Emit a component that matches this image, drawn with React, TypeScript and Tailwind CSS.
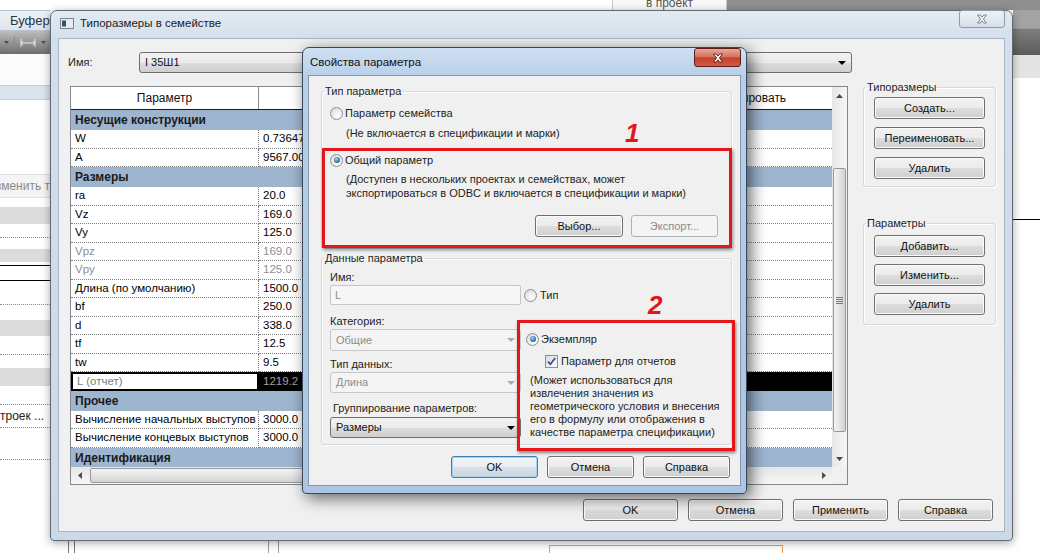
import clsx from "clsx";
import type { ReactNode } from "react";

const face = "font-['Liberation_Sans',Arial,sans-serif]";

type Row =
  | { group: string }
  | { name: string; value: string; muted?: boolean; sel?: boolean };

const rows: Row[] = [
  { group: "Несущие конструкции" },
  { name: "W", value: "0.73647" },
  { name: "A", value: "9567.00" },
  { group: "Размеры" },
  { name: "ra", value: "20.0" },
  { name: "Vz", value: "169.0" },
  { name: "Vy", value: "125.0" },
  { name: "Vpz", value: "169.0", muted: true },
  { name: "Vpy", value: "125.0", muted: true },
  { name: "Длина (по умолчанию)", value: "1500.0" },
  { name: "bf", value: "250.0" },
  { name: "d", value: "338.0" },
  { name: "tf", value: "12.5" },
  { name: "tw", value: "9.5" },
  { name: "L (отчет)", value: "1219.2", sel: true },
  { group: "Прочее" },
  { name: "Вычисление начальных выступов", value: "3000.0" },
  { name: "Вычисление концевых выступов", value: "3000.0" },
  { group: "Идентификация" },
];

function Btn({
  children,
  className,
  focused,
  disabled,
}: {
  children: ReactNode;
  className?: string;
  focused?: boolean;
  disabled?: boolean;
}) {
  return (
    <div
      className={clsx(
        "flex h-[22px] shrink-0 items-center justify-center rounded-[3px] border text-[11px] leading-none",
        disabled
          ? "border-[#adb2b5] bg-[#f4f4f4] text-[#8a8a8a]"
          : focused
            ? "border-[#3c7fb1] bg-[linear-gradient(#f1f5f8,#e8eef3_50%,#d8e1e9_51%,#cbd5de)] text-[#111] shadow-[inset_0_0_0_1px_#a9d4ef]"
            : "border-[#707070] bg-[linear-gradient(#f2f2f2,#ebebeb_50%,#dddddd_51%,#cfcfcf)] text-[#111] shadow-[inset_0_0_0_1px_#fbfbfb]",
        className,
      )}
    >
      {children}
    </div>
  );
}

function Group({ title, className, children }: { title: string; className?: string; children: ReactNode }) {
  return (
    <fieldset className={clsx("shrink-0 rounded-[3px] border border-[#d0d9df] shadow-[inset_1px_1px_0_#fff,1px_1px_0_#fff]", className)}>
      <legend className="ml-[2px] px-[1px] text-[11px] leading-[14px] text-[#1e1e1e]">{title}</legend>
      {children}
    </fieldset>
  );
}

function Radio({ on }: { on?: boolean }) {
  return (
    <span className="flex h-[13px] w-[13px] shrink-0 items-center justify-center rounded-full border border-[#8c8f91] bg-[radial-gradient(circle_at_65%_70%,#ffffff,#d6d6d6)]">
      {on && <span className="h-[6px] w-[6px] rounded-full bg-[radial-gradient(circle_at_40%_35%,#9bd6f8,#1d5c93_75%)]" />}
    </span>
  );
}

function Check() {
  return (
    <span className="flex h-[13px] w-[13px] shrink-0 items-center justify-center border border-[#8c8f91] bg-[linear-gradient(135deg,#dadada,#fafafa)]">
      <svg width="9" height="9" viewBox="0 0 9 9">
        <path d="M1 4.6l2.4 2.6L8.2 1" fill="none" stroke="#3d4f90" strokeWidth="1.8" />
      </svg>
    </span>
  );
}

function Arrow({ color = "#000" }: { color?: string }) {
  return (
    <svg width="8" height="4" viewBox="0 0 8 4">
      <path d="M0 0h8L4 4z" fill={color} />
    </svg>
  );
}

function Tri({ d, w = 7, h = 4 }: { d: string; w?: number; h?: number }) {
  return (
    <svg width={w} height={h} viewBox={`0 0 ${w} ${h}`}>
      <path d={d} fill="#4a4a4a" />
    </svg>
  );
}

function Drop({ text, className, disabled }: { text: string; className?: string; disabled?: boolean }) {
  return (
    <div
      className={clsx(
        "flex shrink-0 items-center justify-between rounded-[3px] border pl-[5px] pr-[5px] text-[11px]",
        disabled
          ? "border-[#c3c7ca] bg-[#f4f4f4] text-[#8d8d8d]"
          : "border-[#707070] bg-[linear-gradient(#f2f2f2,#ebebeb_50%,#dddddd_51%,#cfcfcf)] text-[#111]",
        className,
      )}
    >
      <span>{text}</span>
      <Arrow color={disabled ? "#ababab" : "#000"} />
    </div>
  );
}

function XGlyph({ fill, stroke }: { fill: string; stroke: string }) {
  return (
    <svg width="12" height="10" viewBox="0 0 12 10">
      <path d="M1.5 1h2.8L6 3.2 7.7 1h2.8L7.4 5l3.1 4H7.7L6 6.8 4.3 9H1.5l3.1-4z" fill={fill} stroke={stroke} strokeWidth="0.9" />
    </svg>
  );
}

function FamilyIcon() {
  return (
    <svg width="14" height="11" viewBox="0 0 14 11" className="mt-[7px] ml-[2px] shrink-0">
      <rect x="0.5" y="0.5" width="13" height="10" fill="#e8ecf0" stroke="#7c858f" />
      <rect x="2" y="2.5" width="4" height="6" fill="#2e5a5e" />
    </svg>
  );
}

function RibbonTop() {
  return (
    <div className="flex h-[10px] shrink-0">
      <div className="w-[612px] bg-white" />
      <div className="flex w-[115px] items-end justify-center overflow-hidden border-x border-[#c9c9c9] bg-[#f8f8f8] text-[12px] leading-[14px] text-[#555]">
        в проект
      </div>
      <div className="flex-1 bg-[#8f8f8f]" />
    </div>
  );
}

// properties palette peeking out on the left of the dialogs
function PaletteLeft() {
  return (
    <div className="flex w-[50px] shrink-0 flex-col overflow-hidden bg-white">
      <div className="flex h-[21px] shrink-0 items-center whitespace-nowrap border-y border-[#b8c4d1] bg-[linear-gradient(#eef2f6,#dde4ec)] pl-[10px] text-[13px] text-[#2a3644]">
        Буфер обмена
      </div>
      <div className="flex h-[23px] shrink-0 items-center gap-[5px] bg-[linear-gradient(#bdbdbd,#6e6e6e)] pl-[4px]">
        <Tri d="M0 0h5L2.5 3z" w={5} h={3} />
        <span className="h-[14px] w-px bg-[#8a8a8a]" />
        <svg width="16" height="8" viewBox="0 0 16 8">
          <path d="M1 0v8M15 0v8M1 4h14M3 2L1 4l2 2M13 2l2 2-2 2" fill="none" stroke="#e8e8e8" strokeWidth="1" />
        </svg>
        <Tri d="M0 0h5L2.5 3z" w={5} h={3} />
      </div>
      <div className="h-[31px] shrink-0 bg-[#fbfbfb]" />
      <div className="h-[15px] shrink-0 border-y border-[#c5cfda] bg-[#dbe3ec]" />
      <div className="h-[74px] shrink-0" />
      <div className="flex h-[24px] shrink-0 items-center overflow-hidden whitespace-nowrap border-y border-[#e0e0e0] bg-[#f4f4f4] text-[12px] text-[#8a8a8a]">
        <span className="-ml-[13px]">Изменить тип</span>
      </div>
      <div className="mt-[9px] h-[17px] shrink-0 bg-[#dcdcdc]" />
      <div className="h-[14px] shrink-0 border-b border-dotted border-[#888]" />
      <div className="h-[11px] shrink-0" />
      <div className="h-[13px] shrink-0 bg-[#dcdcdc]" />
      <div className="h-[3px] shrink-0" />
      <div className="h-[16px] shrink-0 border-y border-black" />
      <div className="h-[24px] shrink-0 border-b border-dotted border-[#888]" />
      <div className="h-[15px] shrink-0" />
      <div className="h-[16px] shrink-0 bg-[#dcdcdc]" />
      <div className="h-[19px] shrink-0 border-b border-dotted border-[#888]" />
      <div className="h-[13px] shrink-0" />
      <div className="h-[18px] shrink-0 bg-[#dcdcdc]" />
      <div className="h-[19px] shrink-0 border-b border-dotted border-[#888]" />
      <div className="flex h-[23px] shrink-0 items-center overflow-hidden whitespace-nowrap border-b border-dotted border-[#888] text-[12px] text-[#222]">
        <span className="-ml-[6px]">строек ...</span>
      </div>
      <div className="h-[32px] shrink-0 border-b border-dotted border-[#888]" />
    </div>
  );
}

function PaneRight() {
  return (
    <div className="flex w-[27px] shrink-0 flex-col">
      <div className="h-[18px] bg-[#a3a3a3]" />
      <div className="h-[27px] border-t border-[#9a9a9a] bg-[linear-gradient(#7d7d7d,#5c5c5c)]" />
      <div className="h-[23px] bg-[#e4e4e4]" />
      <div className="h-[142px] border-b border-black bg-white" />
    </div>
  );
}

function FooterStrip() {
  return (
    <div className="flex h-[12px] shrink-0 bg-white">
      <div className="ml-[68px] w-px bg-[#7a7a7a]" />
      <div className="ml-[5px] w-px bg-[#7a7a7a]" />
      <div className="ml-[193px] w-px bg-[#9a9a9a]" />
      <div className="ml-[9px] w-px bg-[#9a9a9a]" />
      <div className="ml-[270px] mt-[4px] h-[8px] w-[234px] border-x border-t border-[#f09a52]" />
    </div>
  );
}

function TypeTable() {
  return (
    <div className="mt-[6px] ml-[2px] flex h-[399px] w-[778px] shrink-0 flex-col border border-[#828790] bg-white">
      <div className="flex h-[380px]">
        <div className="w-[761px] overflow-hidden">
          <div className="flex h-[23px] border-b border-[#1a1a1a] text-[12px] text-[#111]">
            <div className="flex w-[188px] items-center justify-center border-r border-[#8c8c8c]">Параметр</div>
            <div className="flex w-[220px] items-center justify-center border-r border-[#d5d5d5]">Значение</div>
            <div className="flex w-[190px] items-center justify-center border-r border-[#d5d5d5]">Формула</div>
            <div className="flex w-[163px] items-center justify-center">Блокировать</div>
          </div>
          {rows.map((r, i) =>
            "group" in r ? (
              <div key={i} className="flex h-[20px] items-center bg-[#9db5cf] pl-[4px] text-[12px] font-bold text-[#1a1a1a]">
                {r.group}
              </div>
            ) : (
              <div key={i} className="flex h-[18.5px] text-[11.5px]">
                <div
                  className={clsx(
                    "flex w-[188px] items-center overflow-hidden whitespace-nowrap pl-[4px]",
                    r.sel ? "border-2 border-black pl-[3px] text-[#7d7d7d]" : "border-r border-b border-dotted border-[#7f7f7f]",
                    r.muted && "text-[#8f8f8f]",
                  )}
                >
                  {r.name}
                </div>
                <div
                  className={clsx(
                    "flex w-[220px] items-center pl-[4px]",
                    r.sel ? "bg-black text-[#a0a0a0]" : "border-r border-b border-dotted border-[#7f7f7f]",
                    r.muted && "text-[#8f8f8f]",
                  )}
                >
                  {r.value}
                </div>
                <div className={clsx("w-[190px]", r.sel ? "bg-black" : "border-r border-b border-dotted border-[#7f7f7f]")} />
                <div className={clsx("w-[163px]", r.sel ? "bg-black" : "border-b border-dotted border-[#7f7f7f]")} />
              </div>
            ),
          )}
        </div>
        {/* vertical scrollbar */}
        <div className="flex w-[15px] flex-col bg-[linear-gradient(90deg,#e6e6e6,#f6f6f6)]">
          <div className="flex h-[17px] shrink-0 items-center justify-center">
            <Tri d="M0 4L3.5 0 7 4z" />
          </div>
          <div className="mx-px mt-[64px] flex h-[264px] shrink-0 items-center justify-center rounded-[2px] border border-[#9a9a9a] bg-[linear-gradient(90deg,#f4f4f4,#e4e4e4_50%,#d3d3d3)]">
            <div className="flex flex-col gap-[1px]">
              <span className="h-px w-[7px] bg-[#777]" />
              <span className="h-px w-[7px] bg-[#777]" />
              <span className="h-px w-[7px] bg-[#777]" />
              <span className="h-px w-[7px] bg-[#777]" />
            </div>
          </div>
          <div className="flex-1" />
          <div className="flex h-[17px] shrink-0 items-center justify-center">
            <Tri d="M0 0h7L3.5 4z" />
          </div>
        </div>
      </div>
      {/* horizontal scrollbar */}
      <div className="flex flex-1">
        <div className="flex w-[761px] items-center bg-[linear-gradient(#e6e6e6,#f6f6f6)]">
          <div className="flex w-[17px] justify-center">
            <Tri d="M4 0v7L0 3.5z" w={4} h={7} />
          </div>
          <div className="ml-[2px] h-[15px] w-[560px] rounded-[2px] border border-[#9a9a9a] bg-[linear-gradient(#f4f4f4,#e4e4e4_50%,#d3d3d3)]" />
          <div className="flex-1" />
          <div className="flex w-[17px] justify-center">
            <Tri d="M0 0v7l4-3.5z" w={4} h={7} />
          </div>
        </div>
        <div className="flex-1 bg-[#f0f0f0]" />
      </div>
    </div>
  );
}

function TypesWindow() {
  return (
    <div className="absolute left-[50px] top-[10px] flex h-[531px] w-[963px] flex-col rounded-t-[7px] rounded-b-[4px] border border-[#616b76] bg-[linear-gradient(#e3ebf3,#d3dfeb_28px,#cbd8e6)] px-[7px] pb-[8px] shadow-[0_2px_8px_rgba(0,0,0,0.35)]">
      <div className="flex h-[27px] shrink-0 items-start">
        <FamilyIcon />
        <span className="ml-[6px] mt-[5px] text-[11.5px] leading-[14px] text-[#1b1b1b]">Типоразмеры в семействе</span>
        <div className="ml-auto -mt-px flex h-[18px] w-[46px] items-center justify-center rounded-[3px] border border-[#8d9bab] bg-[linear-gradient(#eef2f6,#d6dfe9)]">
          <XGlyph fill="#f4f6f8" stroke="#6f7a86" />
        </div>
      </div>
      <div className="flex flex-1 flex-col border border-[#a9b5c3] bg-[#f0f0f0] pl-[9px] pr-[11px] pt-[13px]">
        <div className="flex h-[21px] items-center">
          <span className="w-[71px] text-[11px] text-[#1e1e1e]">Имя:</span>
          <Drop text="I 35Ш1" className="h-[21px] w-[713px]" />
        </div>
        <div className="mt-[7px] flex items-start">
          <TypeTable />
          <div className="ml-[15px] flex w-[130px] flex-col">
            <Group title="Типоразмеры" className="h-[107px]">
              <div className="flex flex-col gap-[8px] px-[10px] pt-[3px]">
                <Btn className="w-[111px]">Создать...</Btn>
                <Btn className="w-[111px]">Переименовать...</Btn>
                <Btn className="w-[111px]">Удалить</Btn>
              </div>
            </Group>
            <Group title="Параметры" className="mt-[29px] h-[109px]">
              <div className="flex flex-col gap-[7px] px-[10px] pt-[5px]">
                <Btn className="w-[111px]">Добавить...</Btn>
                <Btn className="w-[111px]">Изменить...</Btn>
                <Btn className="w-[111px]">Удалить</Btn>
              </div>
            </Group>
          </div>
        </div>
        <div className="mt-[14px] flex justify-end gap-[10px]">
          <Btn className="w-[95px]">OK</Btn>
          <Btn className="w-[95px]">Отмена</Btn>
          <Btn className="w-[95px]">Применить</Btn>
          <Btn className="w-[95px]">Справка</Btn>
        </div>
      </div>
    </div>
  );
}

function ParamWindow() {
  return (
    <div className="absolute left-[302px] top-[47px] flex h-[447px] w-[445px] flex-col rounded-t-[7px] rounded-b-[4px] border border-[#38475a] bg-[linear-gradient(#cfe0f2,#b9cfe8_28px,#adc5e1)] px-[5px] pb-[7px] shadow-[4px_4px_16px_rgba(0,0,0,0.6)]">
      <div className="flex h-[27px] shrink-0 items-start">
        <span className="ml-[2px] mt-[7px] text-[11.5px] leading-[14px] text-[#111]">Свойства параметра</span>
        <div className="ml-auto flex h-[19px] w-[47px] items-center justify-center rounded-[3px] border border-[#5b1e1a] bg-[linear-gradient(#eaa898,#d7735d_45%,#c5402f_52%,#d45a42)]">
          <XGlyph fill="#ffffff" stroke="#5a1c18" />
        </div>
      </div>
      <div className="relative flex flex-1 flex-col border border-[#8197b3] bg-[#f0f0f0] text-[11px] text-[#1e1e1e]">
        <Group title="Тип параметра" className="ml-[12px] mt-[8px] h-[165px] w-[411px]">
          <div className="flex flex-col pl-[8px] pt-[7px]">
            <div className="flex h-[16px] items-center gap-[2px]">
              <Radio />
              <span>Параметр семейства</span>
            </div>
            <div className="mt-[5px] h-[14px] pl-[16px] leading-[14px]">(Не включается в спецификации и марки)</div>
            <div className="mt-[12px] flex h-[16px] items-center gap-[2px]">
              <Radio on />
              <span>Общий параметр</span>
            </div>
            <div className="mt-[4px] pl-[16px] leading-[14px]">
              (Доступен в нескольких проектах и семействах, может
              <br />
              экспортироваться в ODBC и включается в спецификации и марки)
            </div>
            <div className="mt-[15px] flex justify-end gap-[8px] pr-[13px]">
              <Btn className="w-[88px]">Выбор...</Btn>
              <Btn disabled className="w-[87px]">
                Экспорт...
              </Btn>
            </div>
          </div>
        </Group>
        <Group title="Данные параметра" className="ml-[12px] mt-[2px] h-[194px] w-[411px]">
          <div className="flex pl-[8px] pt-[5px]">
            <div className="flex w-[191px] flex-col">
              <span className="h-[14px] leading-[14px]">Имя:</span>
              <div className="mt-[1px] flex h-[20px] items-center rounded-[2px] border border-[#c3c7ca] bg-[#f7f7f7] pl-[4px] text-[#8d8d8d]">L</div>
              <span className="mt-[9px] h-[14px] leading-[14px]">Категория:</span>
              <Drop disabled text="Общие" className="mt-[1px] h-[22px]" />
              <span className="mt-[6px] h-[14px] leading-[14px]">Тип данных:</span>
              <Drop disabled text="Длина" className="mt-[1px] h-[21px]" />
              <span className="mt-[8px] h-[14px] pl-[3px] leading-[14px]">Группирование параметров:</span>
              <Drop text="Размеры" className="mt-[2px] h-[21px]" />
            </div>
            <div className="ml-[3px] flex flex-col">
              <div className="mt-[15px] flex h-[20px] items-center gap-[3px]">
                <Radio />
                <span>Тип</span>
              </div>
              <div className="ml-[2px] mt-[26px] flex h-[16px] items-center gap-[2px]">
                <Radio on />
                <span>Экземпляр</span>
              </div>
              <div className="ml-[21px] mt-[6px] flex h-[16px] items-center gap-[3px]">
                <Check />
                <span>Параметр для отчетов</span>
              </div>
              <p className="ml-[6px] mt-[5px] whitespace-nowrap leading-[13px]">
                (Может использоваться для
                <br />
                извлечения значения из
                <br />
                геометрического условия и внесения
                <br />
                его в формулу или отображения в
                <br />
                качестве параметра спецификации)
              </p>
            </div>
          </div>
        </Group>
        <div className="mt-[11px] flex justify-end gap-[9px] pr-[10px]">
          <Btn focused className="w-[87px]">
            OK
          </Btn>
          <Btn className="w-[87px]">Отмена</Btn>
          <Btn className="w-[87px]">Справка</Btn>
        </div>

        {/* red callouts drawn over the dialog */}
        <div className="absolute left-[13px] top-[72px] h-[100px] w-[410px] border-[3px] border-[#e3161c] shadow-[1px_2px_3px_rgba(0,0,0,0.45)]" />
        <div className="absolute left-[208px] top-[244px] h-[131px] w-[218px] border-[3px] border-[#e3161c] shadow-[1px_2px_3px_rgba(0,0,0,0.45)]" />
        <span className="absolute left-[316px] top-[44px] text-[26px] font-bold italic leading-[26px] text-[#e3161c]">1</span>
        <span className="absolute left-[339px] top-[216px] text-[26px] font-bold italic leading-[26px] text-[#e3161c]">2</span>
      </div>
    </div>
  );
}

export default function App() {
  return (
    <div className={clsx("relative flex h-[553px] w-[1040px] flex-col overflow-hidden bg-white text-black", face)}>
      <RibbonTop />
      <div className="flex flex-1">
        <PaletteLeft />
        <div className="flex-1 bg-white" />
        <PaneRight />
      </div>
      <FooterStrip />
      <TypesWindow />
      <ParamWindow />
    </div>
  );
}
